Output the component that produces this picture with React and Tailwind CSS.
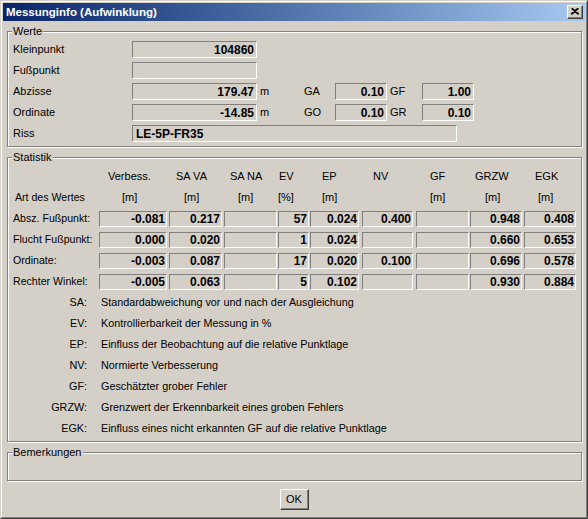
import React from "react";

const FACE = "bg-[#d4d0c8]";

function Sunken({ cls, children, left }) {
  return (
    <div
      className={`${cls} h-[17px] flex items-center border border-t-[#808080] border-l-[#808080] border-r-white border-b-white font-bold text-[12px] ${left ? "justify-start pl-[3px]" : "justify-end pr-[2px]"}`}
    >
      {children}
    </div>
  );
}

function Group({ label, cls, children }) {
  return (
    <div className={`relative border border-[#808080] shadow-[inset_1px_1px_0_#ffffff,1px_1px_0_#ffffff] ${cls}`}>
      <span className={`absolute -top-[7px] left-[4px] px-[1px] leading-[13px] ${FACE}`}>{label}</span>
      {children}
    </div>
  );
}

const cols = [
  { c: "w-[68px]", h: "pl-[9px]", u: "pl-[23px]", hd: "Verbess.", un: "[m]" },
  { c: "ml-[2px] w-[53px]", h: "pl-[7px]", u: "pl-[15px]", hd: "SA VA", un: "[m]" },
  { c: "ml-[2px] w-[53px]", h: "pl-[6px]", u: "pl-[14px]", hd: "SA NA", un: "[m]" },
  { c: "ml-[1px] w-[31px]", h: "pl-[1px]", u: "pl-[0px]", hd: "EV", un: "[%]" },
  { c: "ml-[1px] w-[49px]", h: "pl-[12px]", u: "pl-[12px]", hd: "EP", un: "[m]" },
  { c: "ml-[3px] w-[51px]", h: "pl-[11px]", u: "pl-[11px]", hd: "NV", un: "" },
  { c: "ml-[3px] w-[53px]", h: "pl-[14px]", u: "pl-[14px]", hd: "GF", un: "[m]" },
  { c: "ml-[1px] w-[52px]", h: "pl-[5px]", u: "pl-[15px]", hd: "GRZW", un: "[m]" },
  { c: "ml-[2px] w-[52px]", h: "pl-[11px]", u: "pl-[14px]", hd: "EGK", un: "[m]" },
];

const rows = [
  ["Absz. Fußpunkt:", ["-0.081", "0.217", "", "57", "0.024", "0.400", "", "0.948", "0.408"]],
  ["Flucht Fußpunkt:", ["0.000", "0.020", "", "1", "0.024", "", "", "0.660", "0.653"]],
  ["Ordinate:", ["-0.003", "0.087", "", "17", "0.020", "0.100", "", "0.696", "0.578"]],
  ["Rechter Winkel:", ["-0.005", "0.063", "", "5", "0.102", "", "", "0.930", "0.884"]],
];

const legend = [
  ["SA:", "Standardabweichung vor und nach der Ausgleichung"],
  ["EV:", "Kontrollierbarkeit der Messung in %"],
  ["EP:", "Einfluss der Beobachtung auf die relative Punktlage"],
  ["NV:", "Normierte Verbesserung"],
  ["GF:", "Geschätzter grober Fehler"],
  ["GRZW:", "Grenzwert der Erkennbarkeit eines groben Fehlers"],
  ["EGK:", "Einfluss eines nicht erkannten GF auf die relative Punktlage"],
];

export default function App() {
  return (
    <div className="w-[588px] h-[519px] border border-t-[#d4d0c8] border-l-[#d4d0c8] border-r-[#404040] border-b-[#404040] font-['Liberation_Sans',Arial,sans-serif] text-[11px] text-black select-none">
      <div className={`w-full h-full border border-t-white border-l-white border-r-[#808080] border-b-[#808080] p-[1px] ${FACE}`}>
        {/* Title bar */}
        <div className="h-[18px] flex items-center justify-between bg-linear-to-r from-[#0a246a] to-[#a6caf0]">
          <span className="pl-[3px] text-white font-bold text-[11.5px] leading-[14px]">Messunginfo (Aufwinklung)</span>
          <div className={`mr-[2px] w-[16px] h-[14px] flex items-center justify-center border border-t-white border-l-white border-r-[#404040] border-b-[#404040] shadow-[inset_-1px_-1px_0_#808080] ${FACE}`}>
            <svg width="8" height="7" viewBox="0 0 8 7" className="mb-[1px]">
              <path d="M0.5 0.5 L7.5 6.5 M1.5 0.5 L8 6 M7.5 0.5 L0.5 6.5 M6.5 0.5 L0 6" stroke="#000" strokeWidth="1.1" fill="none" />
            </svg>
          </div>
        </div>

        <div className="pl-[4px]">
          {/* Werte */}
          <Group label="Werte" cls="mt-[10px] w-[575px] h-[116px] pt-[9px] pl-[5px]">
            <div className="flex flex-col gap-[4px]">
              <div className="flex items-center h-[17px]">
                <span className="w-[119px]">Kleinpunkt</span>
                <Sunken cls="w-[125px]">104860</Sunken>
              </div>
              <div className="flex items-center h-[17px]">
                <span className="w-[119px]">Fußpunkt</span>
                <Sunken cls="w-[125px]"></Sunken>
              </div>
              <div className="flex items-center h-[17px]">
                <span className="w-[119px]">Abzisse</span>
                <Sunken cls="w-[125px]">179.47</Sunken>
                <span className="w-[46px] pl-[3px]">m</span>
                <span className="w-[32px] pl-[1px]">GA</span>
                <Sunken cls="w-[52px]">0.10</Sunken>
                <span className="w-[35px] pl-[3px]">GF</span>
                <Sunken cls="w-[52px]">1.00</Sunken>
              </div>
              <div className="flex items-center h-[17px]">
                <span className="w-[119px]">Ordinate</span>
                <Sunken cls="w-[125px]">-14.85</Sunken>
                <span className="w-[46px] pl-[3px]">m</span>
                <span className="w-[32px] pl-[1px]">GO</span>
                <Sunken cls="w-[52px]">0.10</Sunken>
                <span className="w-[35px] pl-[3px]">GR</span>
                <Sunken cls="w-[52px]">0.10</Sunken>
              </div>
              <div className="flex items-center h-[17px]">
                <span className="w-[119px]">Riss</span>
                <Sunken cls="w-[325px]" left>LE-5P-FR35</Sunken>
              </div>
            </div>
          </Group>

          {/* Statistik */}
          <Group label="Statistik" cls="mt-[10px] w-[575px] h-[285px] pt-[8px] pl-[5px]">
            <div className="flex items-center h-[21px]">
              <span className="w-[86px]"></span>
              {cols.map((c, i) => (
                <span key={i} className={`${c.c} ${c.h}`}>{c.hd}</span>
              ))}
            </div>
            <div className="flex items-center h-[21px]">
              <span className="w-[86px] pl-[2px] text-[10.6px]">Art des Wertes</span>
              {cols.map((c, i) => (
                <span key={i} className={`${c.c} ${c.u}`}>{c.un}</span>
              ))}
            </div>
            {rows.map(([label, vals]) => (
              <div key={label} className="flex items-center h-[21px]">
                <span className="w-[86px] text-[10.6px] whitespace-nowrap">{label}</span>
                {cols.map((c, i) => (
                  <div
                    key={i}
                    className={`${c.c} h-[16px] flex items-center justify-end pr-[1px] border border-t-[#808080] border-l-[#808080] border-r-white border-b-white font-bold text-[12px]`}
                  >
                    {vals[i]}
                  </div>
                ))}
              </div>
            ))}
            {legend.map(([a, d]) => (
              <div key={a} className="flex items-center h-[21px] text-[10.8px]">
                <span className="w-[74px] text-right">{a}</span>
                <span className="ml-[14px]">{d}</span>
              </div>
            ))}
          </Group>

          {/* Bemerkungen */}
          <Group label="Bemerkungen" cls="mt-[10px] w-[575px] h-[29px]" />
        </div>

        <div className="mt-[8px] flex justify-center">
          <button className={`w-[29px] h-[21px] flex items-center justify-center border border-t-white border-l-white border-r-[#404040] border-b-[#404040] shadow-[inset_-1px_-1px_0_#808080] text-[11px] ${FACE}`}>
            OK
          </button>
        </div>
      </div>
    </div>
  );
}
